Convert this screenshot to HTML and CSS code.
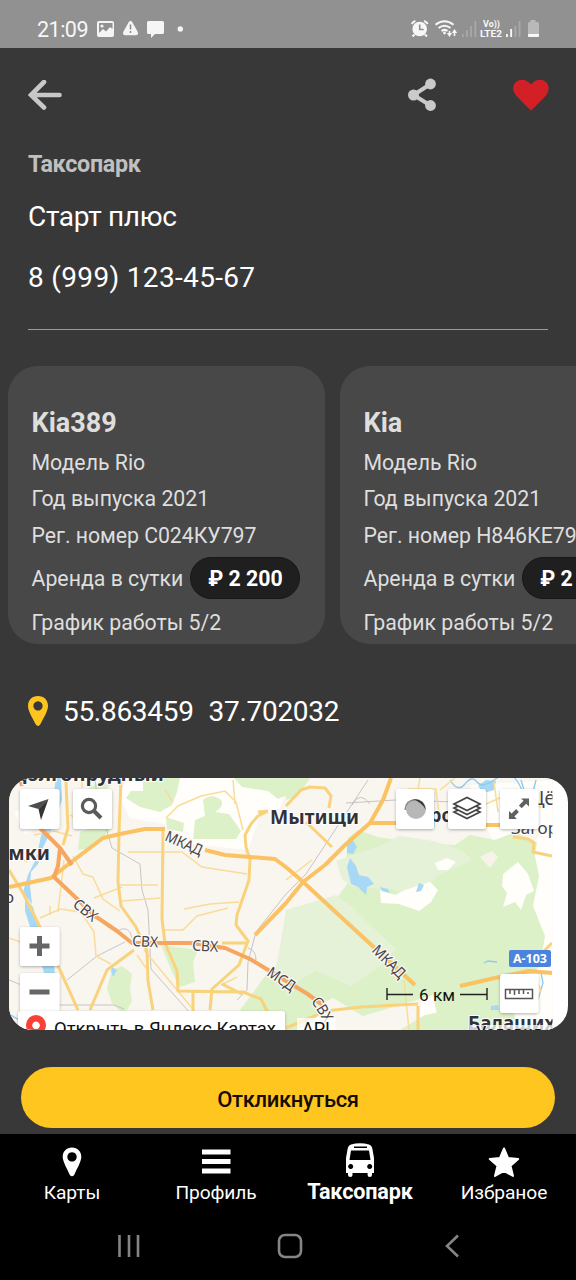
FILE: index.html
```html
<!DOCTYPE html>
<html lang="ru">
<head>
<meta charset="utf-8">
<title>Таксопарк</title>
<link rel="stylesheet" href="styles.css">
</head>
<body>
<div class="screen">
  <div class="status">
    <span class="clock">21:09</span>
    <svg class="status-left" width="90" height="48" viewBox="96 0 90 48" fill="#f5f5f5">
      <path fill-rule="evenodd" d="M99 21h13q2 0 2 2v12q0 2-2 2H99q-2 0-2-2V23q0-2 2-2zM99 23v10l4-4 3 2.5 4-4.500 2.500 2V23z"/>
      <circle cx="102" cy="26" r="1.600"/>
      <path d="M128.500 22.500q2-3.400 4 0l5 9q1.700 3.700-2 3.700h-10q-3.700 0-2-3.700z"/>
      <path d="M130.500 24.500v5M130.500 31v2" stroke="#8b8b8b" stroke-width="1.500"/>
      <path d="M148.500 21h14q1.500 0 1.500 1.500v10q0 1.500-1.500 1.500H155l-4 4v-4h-2.500q-1.500 0-1.500-1.500v-10q0-1.500 1.500-1.500z"/>
      <circle cx="180.300" cy="29" r="2.700"/>
    </svg>
    <svg class="status-right" width="132" height="48" viewBox="408 0 132 48" fill="#f7f7f7">
      <circle cx="419.700" cy="29" r="7.300"/>
      <path d="M411.700 24q1-2 3.700-3.200M427.700 24q-1-2-3.700-3.200M414.500 34.500l-2 2M425 34.500l2 2" stroke="#f7f7f7" stroke-width="2" fill="none"/>
      <path d="M419.700 24.500v5h4" stroke="#8f8f8f" stroke-width="1.600" fill="none"/>
      <g fill="none" stroke="#f7f7f7" stroke-width="2"><path d="M435.500 24.700q9-7 18 0M438.500 28q6-4.600 12 0M441.500 31q3-2.300 6 0"/></g>
      <circle cx="444.500" cy="33" r="1.400"/>
      <path d="M449.500 31v3M454.500 36v-4" stroke="#f7f7f7" stroke-width="1.600"/>
      <path d="M446.800 33h5.400l-2.700 4zM451.800 33h5.400l-2.700-4z"/>
      <g fill="#aaa"><path d="M462 34h1.700v3H462zM466 30h1.700v7H466zM470.200 26h1.700v11h-1.700zM474.500 21h1.700v16h-1.700zM514.500 26h1.700v11h-1.700zM518.700 21h1.700v16h-1.700z"/></g>
      <text class="volte" x="483" y="27" textLength="17" lengthAdjust="spacingAndGlyphs">Vo))</text>
      <text class="volte" x="480" y="37.300" textLength="22" lengthAdjust="spacingAndGlyphs">LTE2</text>
      <path d="M506 34h1.900v3H506zM510.200 29h1.900v8h-1.900z"/>
      <path fill="#b9b9b9" d="M530.500 20h5v2h2q1.500 0 1.500 1.500V34h-11V23.500q0-1.500 1.500-1.500h1z"/>
      <path d="M528 34h11v2q0 1-1 1h-9q-1 0-1-1z"/>
    </svg>
  </div>

  <div class="toolbar">
    <svg width="34" height="30" viewBox="0 0 34 30"><path d="M16 2 3 15l13 12.500M3 15h28.500" fill="none" stroke="#c8c8c8" stroke-width="4.600" stroke-linecap="round" stroke-linejoin="miter"/></svg>
    <div class="actions">
      <svg width="30" height="34" viewBox="0 0 30 34" fill="#cacaca"><path d="M23.500 6 6.500 17l17 10.500" fill="none" stroke="#cacaca" stroke-width="4"/><circle cx="23.500" cy="6" r="5.400"/><circle cx="6.500" cy="17" r="5.500"/><circle cx="23.500" cy="27.500" r="5.400"/></svg>
      <svg width="36" height="32" viewBox="0 0 36 32"><path fill="#d32027" d="M18 31.500Q14 28 3.500 17C-1 12-.8 6 3 3 7.500-.8 14 .2 18 5.500 22-.5 29-.5 33 3c3.600 3.400 3.600 9-.5 14Q22 28 18 31.500z"/></svg>
    </div>
  </div>

  <div class="owner">
    <div class="caption">Таксопарк</div>
    <div class="name">Старт плюс</div>
    <div class="phone">8 (999) 123-45-67</div>
  </div>

  <div class="cars">
    <div class="card">
      <div class="make">Kia389</div>
      <div class="row">Модель Rio</div>
      <div class="row">Год выпуска 2021</div>
      <div class="row plate">Рег. номер С024КУ797</div>
      <div class="row rent">Аренда в сутки<span class="price">₽ 2 200</span></div>
      <div class="row">График работы 5/2</div>
    </div>
    <div class="card">
      <div class="make">Kia</div>
      <div class="row">Модель Rio</div>
      <div class="row">Год выпуска 2021</div>
      <div class="row plate">Рег. номер Н846КЕ797</div>
      <div class="row rent">Аренда в сутки<span class="price">₽ 2 200</span></div>
      <div class="row">График работы 5/2</div>
    </div>
  </div>

  <div class="coords">
    <svg width="20" height="30" viewBox="0 0 20 30"><path fill="#fdc41f" fill-rule="evenodd" d="M10 0c6 0 10 4 10 10 0 5-4.500 12-7.500 18q-2.500 4-5 0C4.500 22 0 15 0 10 0 4 4 0 10 0zm0 5.300a4.600 4.600 0 1 0 .01 0z"/></svg>
    <span class="lat">55.863459</span><span>37.702032</span>
  </div>

  <div class="map">
    <svg width="559" height="252" viewBox="9 778 559 252">
      <defs>
        <filter id="shade" x="-20%" y="-20%" width="140%" height="150%"><feDropShadow dx="0" dy="1" stdDeviation="1.500" flood-opacity=".3"/></filter>
        <clipPath id="tiles"><path d="M9 778h543.500v252H9z"/></clipPath>
      </defs>
      <path fill="#fff" d="M9 778h559v252H9z"/>
      <g clip-path="url(#tiles)">
        <path fill="#f9f5ef" d="M9 778h544v252H9z"/>
        <!-- open land -->
        <g fill="#fffefa">
          <path d="M126 778h164l-10 30-20 8-12 34-60-6-23-20-35-6-10-20zM14 812l25-6 8 15-22 14zM505 865l48-40v205h-45l-10-60 6-30z"/>
          <path d="M425 985l60-10 40 20-40 20-50 15-16-15zM470 785l82-5v50l-60 10z"/>
        </g>
        <!-- woods -->
        <g fill="#dcf1c7">
          <path d="M143 778h37l-3 14-5 13-12 7-20-5-14-9 5-7h12zM234 778h56v16l-12 5-10-8-26-4zM166 817l18 6-1 9-16-3zM80 832l22-8 8 6-18 18-14 2zM86 790l15-9 9 4-8 10z"/>
          <path d="M203 800q8-7 17-1 6 6-5 13l14 2 12 17-5 8h-43l2-19 10-4z"/>
          <path d="M161 945l37 5-5 12 2 20-15 5-8-15zM112 970l10-4 10 8-2 15 2 12-8 14-12-12-5-15zM240 1010l15-20 13-18 20-12 24-20-15-10 20-18 20-14 18-25-9-13 2-22 10-8 20 7 40 6 37 2 15-10 25 5 20-8 22 10-2 14 4 20-6 30 12 30-2 12-5 20-14 14-16 4-15 32-55 2-5-25-20 6-50 15-30-18-12 6-6 17-40 20z"/>
          <path d="M400 1030l25-15 25-5 15-10 40 5 10 10v15zM286 778h24l-12 18-12 4z"/>
        </g>
        <g fill="#e5f2d8">
          <path d="M359 853l25-9 15-8 35 5 28 10 10 9-36 17-20 20-24-8-40-2-10-8-6-18zM286 910l50-15 16 12 18 18 26 24-15 17-30 20-35-15-18 10-25-4 6-24z"/>
        </g>
        <g fill="#fffefa">
          <path d="M380 890l15 5 10-5 25-8 8 8-7 12-12 9-20-7-18-1zM435 863l12-5 9 4-8 8h-10zM503 874l15-12 10 12 6 17-8 4-5 15-6-8-12 5 4-14-5-7z"/>
        </g>
        <path fill="#f7f3ea" d="M480 857l12-6 6 6-8 11z"/>
        <!-- water -->
        <g fill="#a7d8f5">
          <path d="M56 778h5l1 22-7 22-14 30-3 12-7 8-1 14 2 18-9-12 5-17 8-16 5-23 10-22zM25 897l8 10 5 18 16 35 1 18-10-2-12-40-8-25zM352 839l5 8-4 7-6-1v-10zM350 858l6 8 3 9 9 2 6 7-7 3-1 8-8-8-7-3-4-17zM380 887l8 2 2 4-8-2zM419 883l5 2-3 6-5 1zM478 786l8-6 10 1-2 9-10 3zM491 1006l7-1 1 5h-8zM112 967l5 3-4 7-2-6z"/>
        </g>
        <g fill="none" stroke="#8dcaf0" stroke-width="1.300"><path d="M450 780q8 13 15 4t12-2 20-4 24 10 15-8M521 780l4 13M484 963l4-2 9 1M541 973l2 10-6 20M9 1014l10 6 10-3"/></g>
        <!-- railways -->
        <g fill="none" stroke="#c1bec2" stroke-width=".9"><path d="M368 780l-62 94-20 20-30 38-8 30-1 28-10 10M95 778l2 20 15 50 28 16 2 26 6 20 3 59 40 45M9 980l25 10 20 15h60l10 4M67 980l30-24 28-14M346 803l50-3 60 2M352 805q8-15 18-1M119 930q10-5 13 8M248 948q8 2 8 12"/></g>
        <!-- minor roads -->
        <g fill="none" stroke="#f9dc9a" stroke-width="1.500">
          <path d="M82 780v8M166 818l12-12 23-10 24-5 11 11 7 28M173 802l-8-12M233 780l2 24M70 815l13 6M128 852h54l20 15 45 7M73 856l10 18 10 3 10 22 17 12M64 860l-6 52M40 918l20-9 21 3 13 20 2 24M120 885h38M94 898l28-11M122 901l38-3M184 909l26-5 29-2M165 930h18l14-14 31-8M9 938l17 6M96 956l15 8M9 850l18 12M286 880l26-20M408 789h28l3 25M420 778l-2 12M440 790l15-12M456 802l30 2 18-8 40 12M494 782l4 30M510 810l20-7M404 980l5 50M144 950l48 58M137 955l9 13M221 985l16-8M533 975l8 15-10 20M50 906v9M34 835l20-4 18 5"/>
        </g>
        <!-- major roads -->
        <g fill="none" stroke="#f9d27c" stroke-width="3" stroke-linejoin="round">
          <path d="M66 782l2 46-5 17M121 780l-2 52-1 50 3 24 15 21 11 24 1 30 5 29M163 831l-1 88 3 24 12 28 1 20 65 1 18 7 8 16M258 812l10-1M268 811l-10 5-7 8-6 11 1 12 4 13-1 20-12 35-1 10 12 16-9 24-27 24-2 21M9 870l14 23 15 30 22 47 18 40M134 950l-27 20-17 40M222 943h26M193 992v25M222 984l20 10M286 806l15-16 9-3 15 1 6 8-2 12M306 822l26 25M418 1006v24M540 955l12-12M513 837l15 2 6 4-1 9 19 4M286 1028l40-17 35-4 57-3"/>
        </g>
        <g fill="none" stroke="#fac263" stroke-width="4" stroke-linejoin="round">
          <path d="M9 887l42-9 19-15 33-25 17-4 25-5h20M205 850l20 5 50 4 12 9 14 12 40 37 74 68M391 778l-8 22-13 23-25 22-20 20-22 17-17 21-31 32M370 823h28M373 823h60M460 825h40M460 986l35-8 34-7 23 2"/>
        </g>
        <g fill="none" stroke="#f5a661" stroke-width="4" stroke-linejoin="round">
          <path d="M40 828l20 20 12 17M60 848l-2 18-4 11 19 18 22 21 22 15 15 12h60l33 5 25 11 56 34 17 12"/>
        </g>
        <path d="M22 786l-2-8" fill="none" stroke="#f5a661" stroke-width="4"/>
        <!-- place names -->
        <g class="city">
          <text x="11" y="780.500" textLength="153" lengthAdjust="spacingAndGlyphs">Долгопрудный</text>
          <text x="-18" y="860" textLength="68" lengthAdjust="spacingAndGlyphs">Химки</text>
          <text x="270" y="823.500" textLength="89" lengthAdjust="spacingAndGlyphs">Мытищи</text>
          <text x="406" y="822" textLength="80" lengthAdjust="spacingAndGlyphs">Королёв</text>
          <text x="468" y="1030" textLength="98" lengthAdjust="spacingAndGlyphs">Балашиха</text>
        </g>
        <text class="town big" x="525" y="805">Щёлково</text>
        <text class="town" x="511" y="834">Загорянский</text>
        <text class="town" x="4" y="903">о</text>
        <g class="road">
          <text transform="translate(164 840) rotate(24)" textLength="39" lengthAdjust="spacingAndGlyphs">МКАД</text>
          <text transform="translate(72 906) rotate(39)" textLength="26" lengthAdjust="spacingAndGlyphs">СВХ</text>
          <text transform="translate(132 946) rotate(3)" textLength="26" lengthAdjust="spacingAndGlyphs">СВХ</text>
          <text transform="translate(192 950.500) rotate(3)" textLength="26" lengthAdjust="spacingAndGlyphs">СВХ</text>
          <text transform="translate(266 975) rotate(34)" textLength="30" lengthAdjust="spacingAndGlyphs">МСД</text>
          <text transform="translate(311 1001) rotate(58)" textLength="26" lengthAdjust="spacingAndGlyphs">СВХ</text>
          <text transform="translate(371 951) rotate(45)" textLength="40" lengthAdjust="spacingAndGlyphs">МКАД</text>
        </g>
      </g>
      <rect x="509" y="950" width="42" height="17" rx="2" fill="#4c83df"/>
      <text class="shield" x="513" y="963" textLength="34" lengthAdjust="spacingAndGlyphs">А-103</text>
      <!-- scale -->
      <path d="M387 988v12M387 994.500h26M460 994.500h27M487 988v12" fill="none" stroke="#222" stroke-width="1.400"/>
      <text class="ui scale" x="419" y="1001" textLength="36" lengthAdjust="spacingAndGlyphs">6 км</text>
      <!-- controls -->
      <g fill="#fff" filter="url(#shade)">
        <rect x="20" y="789" width="39.500" height="40" rx="3"/><rect x="73" y="789" width="39" height="40" rx="3"/>
        <rect x="396" y="789" width="38" height="40" rx="3"/><rect x="448" y="789" width="38" height="40" rx="3"/><rect x="500" y="789" width="38.500" height="40" rx="3"/>
        <rect x="20" y="927" width="39.500" height="39" rx="3"/><rect x="20" y="973" width="39.500" height="44" rx="3"/><rect x="500" y="974" width="38.500" height="39" rx="3"/>
      </g>
      <path fill="#4d4d4d" d="M28 806l20.500-7-10 10z"/><path fill="#333" d="M48.500 799l-7.500 21-2.500-11z"/>
      <circle cx="89" cy="806" r="6.600" fill="none" stroke="#5b5b5b" stroke-width="3.200"/><path d="M94 811l7 7" stroke="#5b5b5b" stroke-width="4"/>
      <circle cx="416" cy="809" r="10" fill="#b7b7b7"/><path fill="#333" d="M412 799q12-1 14 11-4-8-14-11z"/><path d="M405 810q1-10 10-10" fill="none" stroke="#888" stroke-width="1.500"/>
      <g fill="#fff" stroke="#444" stroke-width="1.700"><path d="M454 812l13-6 13 6-13 6.500z"/><path d="M454 808l13-6 13 6-13 6.500z"/><path d="M454 804l13-6.500 13 6.500-13 6.500z"/></g>
      <path fill="#606060" d="M521 798.500h8v8l-2.800-2.800-4.500 4.500-2.800-2.800 4.600-4.600zM509 811l2.600 2.600 4.500-4.500 2.800 2.800-4.500 4.500 2.500 2.600h-8z"/>
      <path fill="#666" d="M37 936h5v7.500h7.500v5H42v7.500h-5v-7.500h-7.500v-5H37zM29.500 989.500h20v5h-20z"/>
      <path d="M505.500 989.500h27v9h-27zM510 990v4M514.500 990v5M519 990v4M523.500 990v4M528 992v2" fill="none" stroke="#555" stroke-width="1.500"/>
      <rect x="18" y="1011" width="267" height="27" rx="3" fill="#fff" filter="url(#shade)"/>
      <path fill="#fff" fill-opacity=".75" d="M297 1018h39v12h-39zM470 1025h83v5h-83z"/>
      <path fill="#fa4135" fill-rule="evenodd" d="M36 1015a10 10 0 0 1 10 10q0 6-6 9l-4 3-4-3q-6-3-6-9a10 10 0 0 1 10-10zm0 6.500a3.800 3.800 0 1 0 .01 0z"/>
      <text class="ui" x="54" y="1034.500" textLength="222" lengthAdjust="spacingAndGlyphs">Открыть в Яндекс Картах</text>
      <text class="ui" x="302" y="1034.500" textLength="28" lengthAdjust="spacingAndGlyphs">API</text>
      <text class="ui" x="476" y="1039" textLength="66" lengthAdjust="spacingAndGlyphs">Условия</text>
    </svg>
  </div>

  <div class="respond">Откликнуться</div>

  <div class="nav">
    <div class="tab"><svg width="20" height="30" viewBox="0 0 20 30"><path fill="#fff" fill-rule="evenodd" d="M10 .5c5.500 0 9.300 4 9.300 9.200 0 5-4.500 12-7 18q-2.300 3-4.600 0c-2.500-6-7-13-7-18C.7 4.500 4.500.5 10 .5zm0 4.700a4.700 4.700 0 1 0 .01 0z"/></svg><span>Карты</span></div>
    <div class="tab"><svg width="30" height="30" viewBox="0 0 30 30"><path fill="#fff" d="M1 2.500h28.500v5H1zM1 12h28.500v5H1zM1 21.500h28.500v5H1z"/></svg><span>Профиль</span></div>
    <div class="tab active"><svg width="30" height="34" viewBox="0 0 30 34"><path fill="#fff" fill-rule="evenodd" d="M6 1.500Q15-.8 24 1.500q3 1 3.500 5L29 15v15h-2v2q0 2-2.200 2t-2.200-2v-2H7.500v2q0 2-2.200 2T3 32v-2H1V15L2.500 6.500q.5-4 3.500-5zM9 3.500V5h13V3.500zM6 7.500L4.500 17h21L24 7.500zM5.700 21a2.500 2.500 0 1 0 .01 0zm19 0a2.500 2.500 0 1 0 .01 0z"/></svg><span>Таксопарк</span></div>
    <div class="tab"><svg width="32" height="32" viewBox="0 0 32 32"><path fill="#fff" stroke="#fff" stroke-width="2" stroke-linejoin="round" d="M16 2.500l4 9.500 10.200 1-7.700 6.800 2.500 10.200-9-5.200L7 30l2.500-10.200L1.800 13 12 12z"/></svg><span>Избраное</span></div>
  </div>

  <div class="system">
    <svg width="24" height="24" viewBox="0 0 24 24"><path d="M2.500 1v22M12 1v22M21 1v22" stroke="#858585" stroke-width="2.600"/></svg>
    <svg width="26" height="26" viewBox="0 0 26 26"><rect x="2" y="2" width="22" height="22" rx="6" fill="none" stroke="#858585" stroke-width="2.600"/></svg>
    <svg width="16" height="24" viewBox="0 0 16 24"><path d="M14 1.500L3 12l11 10.500" fill="none" stroke="#858585" stroke-width="2.600"/></svg>
  </div>
</div>
</body>
</html>
```
FILE: styles.css
```css
* { box-sizing: border-box; }
body { margin: 0; background: #383838; font-family: Roboto, "Noto Sans", sans-serif; color: #fff; }
svg { display: block; flex: none; }
.screen { width: 576px; height: 1280px; overflow: hidden; background: #383838; display: flex; flex-direction: column; white-space: nowrap; }
.screen > div { flex: none; }

.status { height: 48px; background: #919191; display: flex; align-items: center; padding-left: 37px; }
.clock { width: 59px; font-size: 21.5px; letter-spacing: -.5px; line-height: 24px; padding-top: 12px; color: #f7f7f7; }
.status-right { margin-left: 222px; }
.volte { font: 700 9.5px Roboto, sans-serif; }

.toolbar { height: 90px; padding: 3px 27px 0 28px; display: flex; align-items: center; justify-content: space-between; }
.actions { display: flex; align-items: center; gap: 76px; }

.owner { height: 191.5px; margin: 0 28px; border-bottom: 1.5px solid #9b9b9b; }
.caption { font-size: 23.3px; font-weight: 700; letter-spacing: -.3px; line-height: 53px; color: #c0c0c0; }
.name { font-size: 28px; letter-spacing: -.3px; line-height: 52px; }
.phone { font-size: 28px; letter-spacing: .33px; line-height: 69px; }

.cars { display: flex; gap: 15px; padding: 36.5px 0 0 8px; height: 314.5px; overflow: hidden; }
.card { flex: none; width: 317px; height: 278px; border-radius: 30px; background: #484848; padding: 34.5px 0 0 23.5px; color: #dedede; }
.make { font-size: 27px; font-weight: 700; line-height: 44px; }
.row { font-size: 21.3px; line-height: 36.5px; }
.plate { letter-spacing: -.05px; }
.rent { display: flex; align-items: center; gap: 7px; height: 50.5px; }
.price { width: 110px; height: 42px; border-radius: 21px; background: #1f1f1f; border: 1px solid #181818; color: #fff; font-weight: 700; line-height: 42px; text-align: center; margin-top: -3px; }

.coords { height: 134px; padding-left: 28px; display: flex; align-items: center; font-size: 28px; letter-spacing: -.3px; }
.lat { margin: 0 15px; }

.map { width: 559px; height: 252px; margin-left: 9px; border-radius: 24px; overflow: hidden; }
.city { font: 700 19.5px "Noto Sans", sans-serif; fill: #333238; stroke: #fff; stroke-width: 2px; paint-order: stroke; }
.town { font: 17px "Noto Sans", sans-serif; fill: #444; stroke: #fff; stroke-width: 2px; paint-order: stroke; }
.big { font-size: 19px; }
.road { font: 15px "Noto Sans", sans-serif; fill: #47444b; stroke: #fbf8f2; stroke-width: 2.5px; paint-order: stroke; }
.shield { font: 700 13px "Noto Sans", sans-serif; fill: #fff; }
.ui { font: 18px Roboto, sans-serif; fill: #111; }
.scale { font-size: 17px; }

.respond { width: 534px; height: 60.5px; margin: 37px 0 6.5px 21px; border-radius: 31px; background: #ffc620; color: #160c00; font-size: 22px; letter-spacing: -.35px; font-weight: 500; line-height: 66px; text-align: center; }

.nav { height: 77px; background: #000; display: grid; grid-template-columns: repeat(4, 1fr); }
.tab { display: flex; flex-direction: column; align-items: center; justify-content: space-between; font-size: 19.2px; letter-spacing: -.1px; }
.tab svg { margin-top: 13px; }
.tab:last-child svg { margin-top: 12px; }
.tab span { height: 32px; line-height: 28px; }
.tab.active { font-size: 21.6px; font-weight: 700; letter-spacing: -.15px; }
.tab.active svg { margin-top: 9px; }
.tab.active span { line-height: 26px; }
.system { height: 69px; background: #000; display: flex; align-items: center; padding-left: 117px; }
.system svg:nth-child(2) { margin-left: 136px; }
.system svg:nth-child(3) { margin-left: 141px; }
```
